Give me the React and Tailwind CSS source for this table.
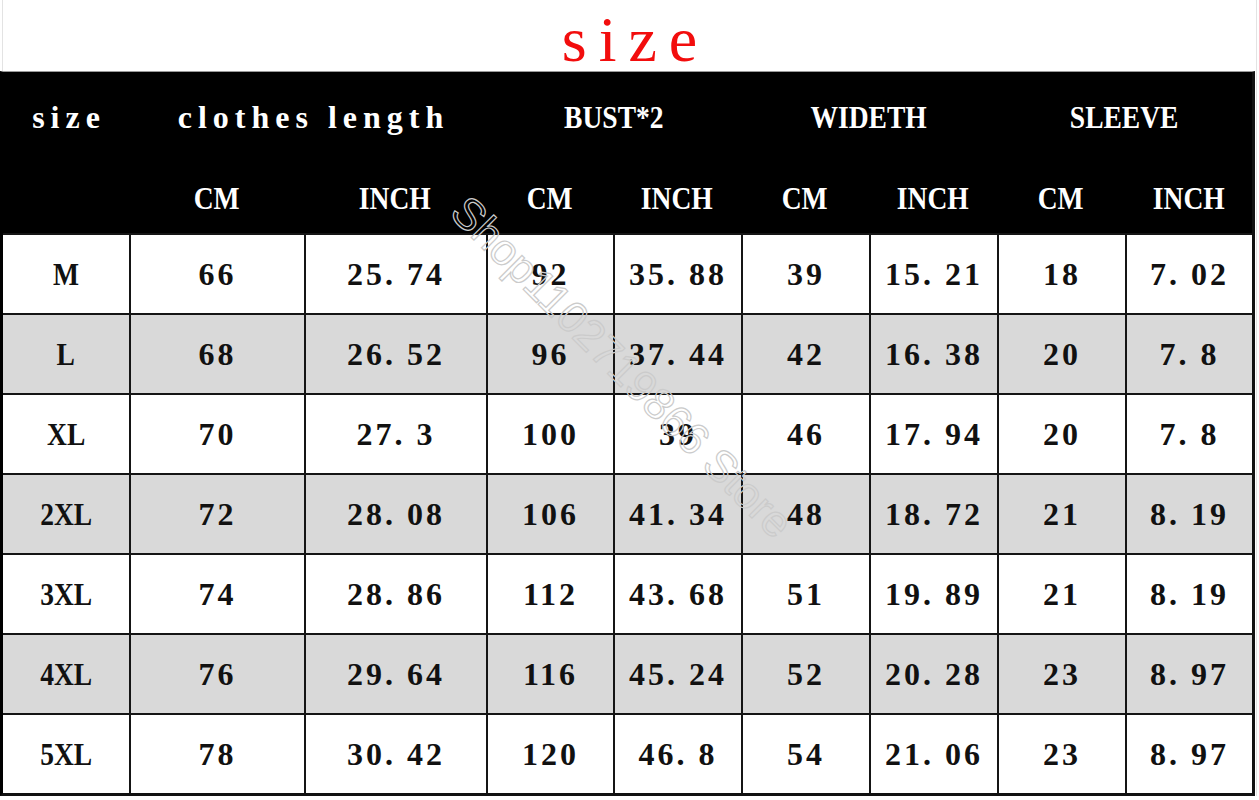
import React from "react";

const rows = [
  ["M", "66", "25.74", "92", "35.88", "39", "15.21", "18", "7.02"],
  ["L", "68", "26.52", "96", "37.44", "42", "16.38", "20", "7.8"],
  ["XL", "70", "27.3", "100", "39", "46", "17.94", "20", "7.8"],
  ["2XL", "72", "28.08", "106", "41.34", "48", "18.72", "21", "8.19"],
  ["3XL", "74", "28.86", "112", "43.68", "51", "19.89", "21", "8.19"],
  ["4XL", "76", "29.64", "116", "45.24", "52", "20.28", "23", "8.97"],
  ["5XL", "78", "30.42", "120", "46.8", "54", "21.06", "23", "8.97"],
];

const cols = "grid grid-cols-[126px_175px_182px_127px_128px_128px_128px_128px_127px]";

// wide gap after the decimal point, like the original sheet font
const Num = ({ v }) => {
  const [a, b] = v.split(".");
  return (
    <span className="tracking-[3px]">
      {a}
      {b !== undefined && (
        <>
          <span className="tracking-[14px]">.</span>
          {b}
        </>
      )}
    </span>
  );
};

const Caps = ({ children }) => (
  <span className="inline-block scale-x-[0.86]">{children}</span>
);

const App = () => {
  return (
    <div className="relative w-[1259px] h-[800px] overflow-hidden bg-white font-['Liberation_Serif',serif]">
      <div className="w-[1257px] border-r border-[#e3e3e3]">
        <div className="h-[71px] ml-[2px] border-l border-[#e3e3e3] pt-[8px] text-center">
          <span className="pl-[12px] text-[64px] leading-none tracking-[12px] text-[#f20d0d]">
            size
          </span>
        </div>

        <div className="w-[1255px] border-t border-[#9a9a9a] border-l-[3px] border-r-[3px] border-b-[3px] border-l-black border-r-[#111] border-b-[#111]">
          <div className="bg-black text-white font-bold text-[32px]">
            <div className={`${cols} h-[90px] items-center text-center`}>
              <div className="tracking-[6px] pl-[6px]">size</div>
              <div className="col-span-2 tracking-[6px] pl-[12px]">clothes length</div>
              <div className="col-span-2">
                <Caps>BUST*2</Caps>
              </div>
              <div className="col-span-2">
                <Caps>WIDETH</Caps>
              </div>
              <div className="col-span-2">
                <Caps>SLEEVE</Caps>
              </div>
            </div>
            <div className={`${cols} h-[71px] items-center text-center`}>
              <div />
              {[0, 1, 2, 3].map((i) => (
                <React.Fragment key={i}>
                  <div>
                    <Caps>CM</Caps>
                  </div>
                  <div>
                    <Caps>INCH</Caps>
                  </div>
                </React.Fragment>
              ))}
            </div>
          </div>

          {rows.map((r, i) => (
            <div
              key={r[0]}
              className={`${cols} h-[80px] border-t-2 border-[#151515] text-[32px] font-bold text-[#111] ${
                i % 2 === 1 ? "bg-[#d9d9d9]" : "bg-white"
              }`}
            >
              {r.map((c, j) => (
                <div
                  key={j}
                  className={`flex items-center justify-center ${
                    j > 0 ? "border-l-2 border-[#151515]" : ""
                  }`}
                >
                  {j === 0 ? <Caps>{c}</Caps> : <Num v={c} />}
                </div>
              ))}
            </div>
          ))}
        </div>
      </div>

      {/* shop watermark over the table */}
      <div className="absolute left-[622px] top-[367px] -translate-x-1/2 -translate-y-1/2 rotate-[45deg] whitespace-nowrap font-['Liberation_Sans',sans-serif] text-[44px] text-transparent [-webkit-text-stroke:1.2px_#cbcbcb]">
        Shop1102719866 Store
      </div>
    </div>
  );
};

export default App;
